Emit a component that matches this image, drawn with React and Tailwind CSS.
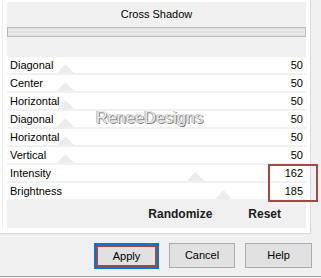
const rows = [
  { label: "Diagonal", value: 50, thumb: 58 },
  { label: "Center", value: 50, thumb: 58 },
  { label: "Horizontal", value: 50, thumb: 58 },
  { label: "Diagonal", value: 50, thumb: 58 },
  { label: "Horizontal", value: 50, thumb: 58 },
  { label: "Vertical", value: 50, thumb: 58 },
  { label: "Intensity", value: 162, thumb: 188 },
  { label: "Brightness", value: 185, thumb: 216 },
];

const Thumb = ({ left }) => (
  <svg
    className="absolute bottom-0"
    style={{ left: left - 8 }}
    width="17"
    height="9"
    viewBox="0 0 17 9"
  >
    <path d="M0 9 L8.5 0 L17 9 Z" fill="#ececec" />
  </svg>
);

const App = () => {
  return (
    <div className="relative w-[321px] h-[278px] bg-[#f0f0f0] overflow-hidden font-['Liberation_Sans',Arial,sans-serif] text-[11px] text-black">
      <div className="h-[277px] border-b border-[#a0a0a0]">
        {/* tab page */}
        <div className="flex w-[311px] h-[234px] bg-white border-r border-b border-[#dadada]">
          <div className="w-[2px]" />
          <div className="w-px h-[228px] bg-[#ececec]" />
          <div className="w-[4px]" />
          <div className="flex flex-col w-[299px] h-[226px] mt-[2px] bg-[#f0f0f0]">
            <div className="h-[24px] flex items-center justify-center">Cross Shadow</div>
            <div className="mt-px h-[10px] border border-[#b9b9b9] bg-[#e6e6e6]" />
            <div className="mt-[20px] flex flex-col gap-[2px]">
              {rows.map((r, i) => (
                <div
                  key={i}
                  className="relative h-[16px] bg-white flex items-center justify-between px-[3px]"
                >
                  <Thumb left={r.thumb} />
                  <span className="relative">{r.label}</span>
                  <span className="relative">{r.value}</span>
                </div>
              ))}
            </div>
            <div className="flex-1 flex items-center justify-end pr-[25px] gap-[36px] text-[12px] font-bold text-[#1a1a1a] pt-px">
              <span>Randomize</span>
              <span>Reset</span>
            </div>
          </div>
        </div>

        {/* buttons */}
        <div className="flex justify-end gap-[10px] pr-[9px] mt-[9px]">
          <div className="w-[65px] h-[26px] border-2 border-[#0078d7] bg-[#e1e1e1]">
            <div className="h-full border-2 border-[#a5483f] flex items-center justify-center">
              Apply
            </div>
          </div>
          <div className="w-[66px] h-[25px] border border-[#adadad] bg-[#e1e1e1] flex items-center justify-center">
            Cancel
          </div>
          <div className="w-[67px] h-[25px] border border-[#adadad] bg-[#e1e1e1] flex items-center justify-center">
            Help
          </div>
        </div>
      </div>

      {/* watermark */}
      <div className="absolute left-[96px] top-[108px] text-[16px] leading-[20px] tracking-[0.2px] text-[#e8e8e8] [text-shadow:1px_1px_0_#808080,-1px_0_0_#b4b4b4]">
        ReneeDesigns
      </div>

      {/* highlight box */}
      <div className="absolute left-[268px] top-[164px] w-[50px] h-[38px] border-2 border-[#a5483f]" />
    </div>
  );
};

export default App;
